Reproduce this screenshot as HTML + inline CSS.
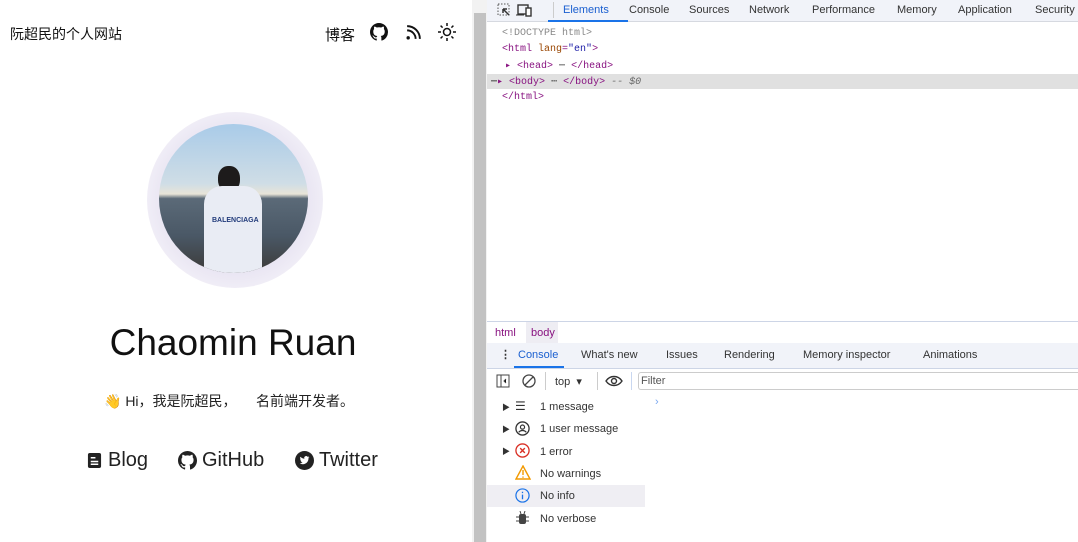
<!DOCTYPE html>
<html><head><meta charset="utf-8"><style>
*{margin:0;padding:0;box-sizing:border-box}
body{width:1078px;height:542px;overflow:hidden;background:#fff;font-family:"Liberation Sans","Noto Sans CJK SC",sans-serif;position:relative}
.a{position:absolute;white-space:nowrap}
.dt{font-size:11px;color:#333}
.code{font-family:"Liberation Mono",monospace;font-size:10px}
.tag{color:#881280}
.lk{font-size:20px;color:#222;top:449px}
</style></head><body>
<div class="a" style="left:10px;top:24px;font-size:14px;color:#111">阮超民的个人网站</div>
<div class="a" style="left:325px;top:24px;font-size:15px;color:#111">博客</div>
<svg class="a" style="left:370px;top:23px" width="18" height="18" viewBox="0 0 16 16"><path fill="#111" d="M8 0C3.600 0 0 3.600 0 8c0 3.500 2.300 6.500 5.500 7.600.4.100.5-.2.5-.4v-1.400c-2.200.5-2.700-1-2.700-1-.4-.9-.9-1.200-.9-1.200-.7-.5.100-.5.100-.5.800.1 1.200.8 1.200.8.700 1.200 1.900.9 2.300.7.100-.5.300-.9.500-1.100-1.800-.2-3.600-.9-3.600-4 0-.9.300-1.600.800-2.200-.1-.2-.4-1 .1-2.100 0 0 .7-.2 2.200.8a7.600 7.600 0 0 1 4 0c1.500-1 2.200-.8 2.200-.8.400 1.100.200 1.900.100 2.100.500.600.800 1.300.800 2.200 0 3.100-1.900 3.800-3.600 4 .300.300.600.800.600 1.500v2.200c0 .200.100.500.600.400A8 8 0 0 0 16 8c0-4.400-3.600-8-8-8z"/></svg>
<svg class="a" style="left:405px;top:24px" width="17" height="17" viewBox="0 0 16 16"><path fill="none" stroke="#111" stroke-width="1.8" d="M2 6a8 8 0 0 1 8 8M2 2a12 12 0 0 1 12 12"/><circle cx="3" cy="13" r="1.6" fill="#111"/></svg>
<svg class="a" style="left:438px;top:23px" width="18" height="18" viewBox="0 0 18 18"><circle cx="9" cy="9" r="3.5" fill="none" stroke="#111" stroke-width="1.5"/><path stroke="#111" stroke-width="1.5" d="M9 0v3M9 15v3M0 9h3M15 9h3M2.600 2.600l2 2M13.400 13.400l2 2M2.600 15.400l2-2M13.400 4.600l2-2"/></svg>

<div class="a" style="left:147px;top:112px;width:176px;height:176px;border-radius:50%;background:radial-gradient(circle,rgba(232,228,242,.9) 60%,rgba(255,255,255,0) 100%)"></div>
<div class="a" style="left:159px;top:124px;width:149px;height:149px;border-radius:50%;overflow:hidden;background:linear-gradient(#a9cbe8 0%,#cfdde6 40%,#e8e4d8 47%,#5b6a78 50%,#4a5866 75%,#3c3a38 100%)">
 <div class="a" style="left:59px;top:42px;width:22px;height:26px;border-radius:45%;background:#1d1b1b"></div>
 <div class="a" style="left:45px;top:62px;width:58px;height:90px;border-radius:18px 18px 0 0;background:#e9ecf4"></div>
 <div class="a" style="left:53px;top:93px;font-size:7px;color:#213a7a;font-weight:bold">BALENCIAGA</div>
</div>

<div class="a" style="left:0;width:466px;top:322px;text-align:center;font-size:37px;color:#111">Chaomin Ruan</div>
<div class="a" style="left:104px;top:391px;font-size:14px;color:#222">👋 Hi，我是阮超民，&nbsp;&nbsp;&nbsp;&nbsp;&nbsp;名前端开发者。</div>

<svg class="a" style="left:87px;top:452px" width="15" height="17" viewBox="0 0 16 18"><rect x="1" y="1" width="14" height="16" rx="2" fill="#222"/><path stroke="#fff" stroke-width="1.6" d="M4 6h5M4 10h8M4 13h8"/></svg>
<div class="a lk" style="left:108px">Blog</div>
<svg class="a" style="left:178px;top:451px" width="19" height="19" viewBox="0 0 16 16"><path fill="#222" d="M8 0C3.600 0 0 3.600 0 8c0 3.500 2.300 6.500 5.500 7.600.4.100.5-.2.5-.4v-1.400c-2.200.5-2.700-1-2.700-1-.4-.9-.9-1.200-.9-1.200-.7-.5.100-.5.100-.5.800.1 1.200.8 1.200.8.700 1.200 1.900.9 2.300.7.100-.5.300-.9.500-1.100-1.800-.2-3.600-.9-3.600-4 0-.9.300-1.600.800-2.200-.1-.2-.4-1 .1-2.100 0 0 .7-.2 2.200.8a7.600 7.600 0 0 1 4 0c1.500-1 2.200-.8 2.200-.8.400 1.100.200 1.900.100 2.100.500.600.800 1.300.800 2.200 0 3.100-1.900 3.800-3.600 4 .300.300.600.800.600 1.500v2.200c0 .200.100.500.600.400A8 8 0 0 0 16 8c0-4.400-3.600-8-8-8z"/></svg>
<div class="a lk" style="left:202px">GitHub</div>
<svg class="a" style="left:295px;top:451px" width="19" height="19" viewBox="0 0 20 20"><circle cx="10" cy="10" r="10" fill="#222"/><path fill="#fff" d="M15 6.500c-.4.200-.8.300-1.200.300.400-.300.800-.700.900-1.100-.4.200-.9.400-1.300.500a2 2 0 0 0-3.500 1.900C8.200 8 6.700 7.200 5.700 6c-.6 1-.3 2.200.6 2.800-.3 0-.6-.1-.9-.2 0 1 .7 1.900 1.600 2.100-.3.100-.6.100-.9 0 .3.800 1 1.400 1.900 1.400A4.200 4.200 0 0 1 5 13c.9.6 2 .9 3.200.9 3.900 0 6-3.200 6-6v-.3c.4-.3.700-.7 1-1.100z"/></svg>
<div class="a lk" style="left:319px">Twitter</div>

<div class="a" style="left:472px;top:0;width:15px;height:542px;background:#f2f2f2"></div>
<div class="a" style="left:474px;top:13px;width:12px;height:529px;background:#c2c2c2"></div>

<div class="a" style="left:487px;top:0;width:591px;height:22px;background:#f1f3f9;border-bottom:1px solid #d6d9e0"></div>
<svg class="a" style="left:497px;top:3px" width="14" height="14" viewBox="0 0 14 14"><rect x="1" y="1" width="11" height="11" fill="none" stroke="#555" stroke-dasharray="1.5 1.5"/><path stroke="#333" stroke-width="1.5" d="M6 6l6 6M6 6h4M6 6v4"/></svg>
<svg class="a" style="left:516px;top:3px" width="16" height="14" viewBox="0 0 16 14"><rect x="2" y="2" width="10" height="9" fill="none" stroke="#333" stroke-width="1.4"/><rect x="10" y="5" width="5" height="8" fill="#fff" stroke="#333" stroke-width="1.4"/><path stroke="#333" d="M0 12h8"/></svg>
<div class="a" style="left:553px;top:2px;width:1px;height:16px;background:#ccc"></div>
<div class="a dt" style="left:563px;top:4px;color:#1a5fd0">Elements</div>
<div class="a" style="left:548px;top:20px;width:80px;height:2px;background:#1a73e8"></div>
<div class="a dt" style="left:629px;top:4px">Console</div>
<div class="a dt" style="left:689px;top:4px">Sources</div>
<div class="a dt" style="left:749px;top:4px">Network</div>
<div class="a dt" style="left:812px;top:4px">Performance</div>
<div class="a dt" style="left:897px;top:4px">Memory</div>
<div class="a dt" style="left:958px;top:4px">Application</div>
<div class="a dt" style="left:1035px;top:4px">Security</div>

<div class="a" style="left:487px;top:74px;width:591px;height:15px;background:#e0e0e0"></div>
<div class="a code" style="left:502px;top:28px;color:#888">&lt;!DOCTYPE html&gt;</div>
<div class="a code tag" style="left:502px;top:44px">&lt;html <span style="color:#994500">lang</span>=<span style="color:#1a1aa6">"en"</span>&gt;</div>
<div class="a code tag" style="left:505px;top:60px">▸ &lt;head&gt; <span style="color:#555">⋯</span> &lt;/head&gt;</div>
<div class="a code tag" style="left:491px;top:76px"><span style="color:#333">⋯</span>▸ &lt;body&gt; <span style="color:#555">⋯</span> &lt;/body&gt; <span style="color:#666;font-style:italic">-- $0</span></div>
<div class="a code tag" style="left:502px;top:92px">&lt;/html&gt;</div>

<div class="a" style="left:487px;top:321px;width:591px;height:1px;background:#cdd5e6"></div>
<div class="a dt" style="left:495px;top:327px;color:#881280">html</div>
<div class="a" style="left:526px;top:322px;width:32px;height:21px;background:#eeedf3"></div>
<div class="a dt" style="left:531px;top:327px;color:#881280">body</div>
<div class="a" style="left:487px;top:343px;width:591px;height:26px;background:#f1f3f9;border-bottom:1px solid #cdd5e6"></div>
<div class="a dt" style="left:500px;top:348px;font-weight:bold">⋮</div>
<div class="a dt" style="left:518px;top:349px;color:#1a5fd0">Console</div>
<div class="a" style="left:514px;top:366px;width:50px;height:2px;background:#1a73e8"></div>
<div class="a dt" style="left:581px;top:349px">What's new</div>
<div class="a dt" style="left:666px;top:349px">Issues</div>
<div class="a dt" style="left:724px;top:349px">Rendering</div>
<div class="a dt" style="left:803px;top:349px">Memory inspector</div>
<div class="a dt" style="left:923px;top:349px">Animations</div>

<svg class="a" style="left:496px;top:374px" width="14" height="14" viewBox="0 0 14 14"><rect x="1" y="1" width="12" height="12" fill="none" stroke="#444"/><path stroke="#444" d="M5 1v12M10 5l-2 2 2 2"/></svg>
<svg class="a" style="left:522px;top:374px" width="14" height="14" viewBox="0 0 14 14"><circle cx="7" cy="7" r="6" fill="none" stroke="#444" stroke-width="1.3"/><path stroke="#444" stroke-width="1.3" d="M3 11l8-8"/></svg>
<div class="a" style="left:545px;top:372px;width:1px;height:18px;background:#ccc"></div>
<div class="a dt" style="left:555px;top:375px">top&nbsp;&nbsp;▾</div>
<div class="a" style="left:597px;top:372px;width:1px;height:18px;background:#ccc"></div>
<svg class="a" style="left:605px;top:375px" width="18" height="12" viewBox="0 0 18 12"><path fill="none" stroke="#333" stroke-width="1.4" d="M1 6c4-6 12-6 16 0-4 6-12 6-16 0z"/><circle cx="9" cy="6" r="2.5" fill="none" stroke="#333" stroke-width="1.4"/></svg>
<div class="a" style="left:631px;top:372px;width:1px;height:18px;background:#c9d7f0"></div>
<div class="a" style="left:638px;top:372px;width:440px;height:18px;border:1px solid #ccc;border-right:none;border-radius:3px 0 0 3px"></div>
<div class="a dt" style="left:641px;top:375px;color:#555">Filter</div>

<div class="a" style="left:487px;top:485px;width:158px;height:22px;background:#efeef3"></div>
<div class="a dt" style="left:655px;top:396px;color:#7aa8f0">›</div>
<div class="a" style="left:502px;top:402px;font-size:8px;color:#333">▶</div>
<div class="a" style="left:502px;top:424px;font-size:8px;color:#333">▶</div>
<div class="a" style="left:502px;top:446px;font-size:8px;color:#333">▶</div>
<div class="a dt" style="left:515px;top:399px;font-size:12px">☰</div>
<svg class="a" style="left:515px;top:421px" width="15" height="15" viewBox="0 0 16 16"><circle cx="8" cy="8" r="7" fill="none" stroke="#333" stroke-width="1.4"/><circle cx="8" cy="6.5" r="2.2" fill="none" stroke="#333" stroke-width="1.3"/><path fill="none" stroke="#333" stroke-width="1.3" d="M4 12c2-2.5 6-2.5 8 0"/></svg>
<svg class="a" style="left:515px;top:443px" width="15" height="15" viewBox="0 0 16 16"><circle cx="8" cy="8" r="7" fill="none" stroke="#d93025" stroke-width="1.4"/><path stroke="#d93025" stroke-width="1.5" d="M5.5 5.5l5 5M10.5 5.5l-5 5"/></svg>
<svg class="a" style="left:515px;top:465px" width="16" height="15" viewBox="0 0 16 15"><path fill="none" stroke="#f29900" stroke-width="1.4" d="M8 1L15 14H1z"/><path stroke="#f29900" stroke-width="1.4" d="M8 5v5M8 11.5v1.3"/></svg>
<svg class="a" style="left:515px;top:488px" width="15" height="15" viewBox="0 0 16 16"><circle cx="8" cy="8" r="7" fill="none" stroke="#1a73e8" stroke-width="1.3"/><path stroke="#1a73e8" stroke-width="1.4" d="M8 7v5M8 4v1.5"/></svg>
<svg class="a" style="left:516px;top:511px" width="13" height="14" viewBox="0 0 13 14"><rect x="3" y="3" width="7" height="10" rx="2" fill="#444"/><path stroke="#444" d="M0 6h13M0 10h13M4 0l1 3M9 0l-1 3"/></svg>
<div class="a dt" style="left:540px;top:401px">1 message</div>
<div class="a dt" style="left:540px;top:423px">1 user message</div>
<div class="a dt" style="left:540px;top:446px">1 error</div>
<div class="a dt" style="left:540px;top:468px">No warnings</div>
<div class="a dt" style="left:540px;top:490px">No info</div>
<div class="a dt" style="left:540px;top:513px">No verbose</div>
</body></html>
